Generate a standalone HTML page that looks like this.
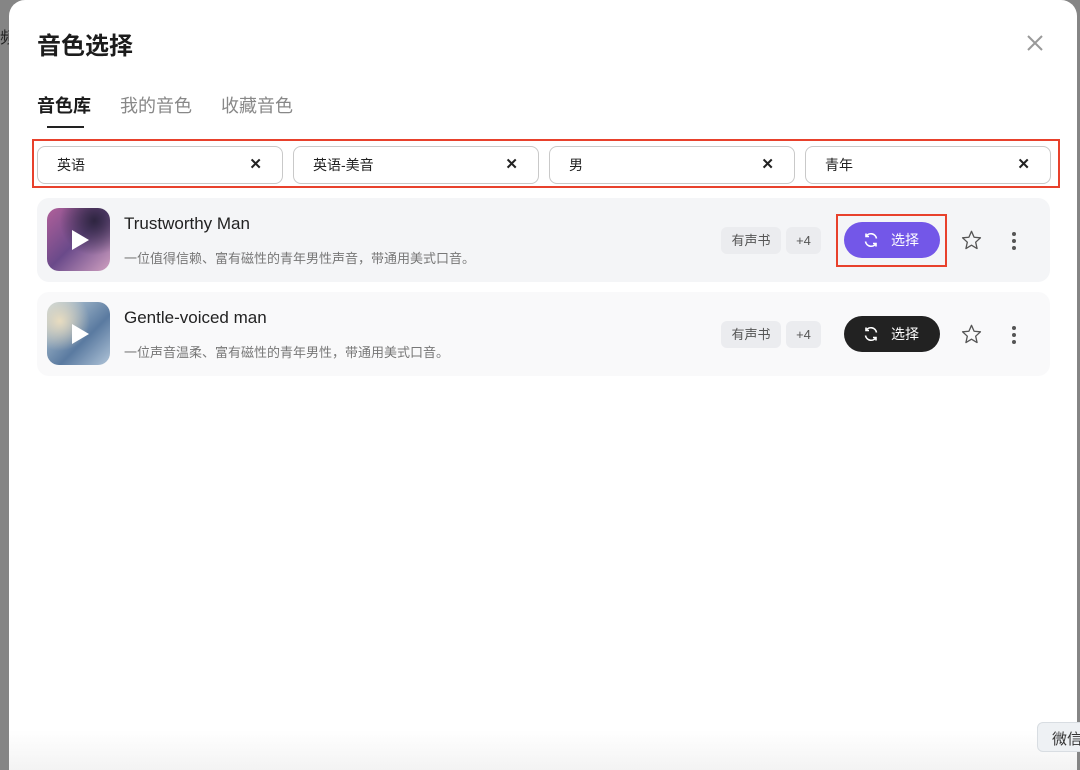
<!DOCTYPE html>
<html><head><meta charset="utf-8"><style>
*{box-sizing:border-box;margin:0;padding:0}
body{width:1080px;height:770px;overflow:hidden;background:#858585;font-family:"Liberation Sans","Noto Sans CJK SC",sans-serif;position:relative}
.modal{position:absolute;left:9px;top:0;width:1068px;height:770px;background:#fff;border-radius:16px 16px 0 0}
.t{position:absolute;left:28px;top:26px;font-size:24px;font-weight:bold;color:#1c1c1c}
.close{position:absolute;left:1016px;top:33px}
.tabs span{position:absolute;top:92px;font-size:18px;color:#888}
.ul{position:absolute;left:38px;top:126px;width:37px;height:2px;background:#222}
.fb{position:absolute;left:23px;top:139px;width:1028px;height:49px;border:2px solid #e8412c}
.f{position:absolute;top:146px;width:246px;height:38px;border:1px solid #c9c9c9;border-radius:8px;font-size:14px;color:#222;padding:8px 0 0 19px}
.f b{position:absolute;right:20px;top:8px;font-size:15px}
.row{position:absolute;left:28px;width:1013px;height:84px;border-radius:12px}
.thumb{position:absolute;left:10px;top:10px;width:63px;height:63px;border-radius:12px}
.name{position:absolute;left:87px;top:16px;font-size:17px;color:#222}
.desc{position:absolute;left:87px;top:50px;font-size:13px;color:#777}
.tag{position:absolute;top:29px;height:27px;border-radius:6px;background:#ebecef;font-size:13px;color:#555;text-align:center;line-height:27px}
.btn{position:absolute;left:807px;top:24px;width:96px;height:36px;border-radius:18px;color:#fff;font-size:14px;line-height:36px;padding-left:47px}
.btn svg{position:absolute;left:19px;top:10px}
.star{position:absolute;left:924px;top:32px}
.dots{position:absolute;left:975px;top:34px;width:4px}
.dots i{display:block;width:4px;height:4px;border-radius:2px;background:#555;margin-bottom:3px}
</style></head><body>
<div style="position:absolute;left:0;top:24px;font-size:16px;color:#222">频</div>
<div class="modal">
<div class="t">音色选择</div>
<svg class="close" width="20" height="20" viewBox="0 0 20 20"><path d="M3 3L17 17M17 3L3 17" stroke="#999" stroke-width="2"/></svg>
<div class="tabs"><span style="left:28px;color:#1c1c1c;font-weight:bold">音色库</span><span style="left:111px">我的音色</span><span style="left:212px">收藏音色</span></div>
<div class="ul"></div>
<div class="fb"></div>
<div class="f" style="left:28px">英语<b>✕</b></div>
<div class="f" style="left:284px">英语-美音<b>✕</b></div>
<div class="f" style="left:540px">男<b>✕</b></div>
<div class="f" style="left:796px">青年<b>✕</b></div>

<div class="row" style="top:198px;background:#f4f5f7">
<div class="thumb" style="background:radial-gradient(circle at 75% 20%,#2e2540,transparent 50%),linear-gradient(135deg,#b0609a,#6a4a8a 50%,#d0a0c0)"></div>
<svg style="position:absolute;left:33px;top:31px" width="20" height="22"><path d="M2 1L19 11L2 21Z" fill="#fff"/></svg>
<div class="name">Trustworthy Man</div>
<div class="desc">一位值得信赖、富有磁性的青年男性声音，带通用美式口音。</div>
<div class="tag" style="left:684px;width:60px">有声书</div>
<div class="tag" style="left:749px;width:35px">+4</div>
<div style="position:absolute;left:799px;top:16px;width:111px;height:53px;border:2px solid #e8412c"></div>
<div class="btn" style="background:#7357e8"><svg width="16" height="16" viewBox="0 0 16 16" fill="none" stroke="#fff" stroke-width="1.6"><path d="M13.5 6.5A5.7 5.7 0 0 0 3 4.5M2.5 9.5A5.7 5.7 0 0 0 13 11.5"/><path d="M3 1.5V4.5H6M13 14.5V11.5H10"/></svg>选择</div>
<svg class="star" width="21" height="20" viewBox="0 0 24 23"><path d="M12 1.5L15 8.3L22.3 9L16.8 14L18.4 21.3L12 17.5L5.6 21.3L7.2 14L1.7 9L9 8.3Z" fill="none" stroke="#555" stroke-width="1.5" stroke-linejoin="round"/></svg>
<div class="dots"><i></i><i></i><i></i></div>
</div>

<div class="row" style="top:292px;background:#f9f9fa">
<div class="thumb" style="background:radial-gradient(circle at 20% 30%,#e8dcc0,transparent 45%),linear-gradient(135deg,#c8d8e0,#5a7aa0 60%,#b0c4d8)"></div>
<svg style="position:absolute;left:33px;top:31px" width="20" height="22"><path d="M2 1L19 11L2 21Z" fill="#fff"/></svg>
<div class="name">Gentle-voiced man</div>
<div class="desc">一位声音温柔、富有磁性的青年男性，带通用美式口音。</div>
<div class="tag" style="left:684px;width:60px">有声书</div>
<div class="tag" style="left:749px;width:35px">+4</div>
<div class="btn" style="background:#222"><svg width="16" height="16" viewBox="0 0 16 16" fill="none" stroke="#fff" stroke-width="1.6"><path d="M13.5 6.5A5.7 5.7 0 0 0 3 4.5M2.5 9.5A5.7 5.7 0 0 0 13 11.5"/><path d="M3 1.5V4.5H6M13 14.5V11.5H10"/></svg>选择</div>
<svg class="star" width="21" height="20" viewBox="0 0 24 23"><path d="M12 1.5L15 8.3L22.3 9L16.8 14L18.4 21.3L12 17.5L5.6 21.3L7.2 14L1.7 9L9 8.3Z" fill="none" stroke="#555" stroke-width="1.5" stroke-linejoin="round"/></svg>
<div class="dots"><i></i><i></i><i></i></div>
</div>
<div style="position:absolute;left:0;bottom:0;width:1068px;height:40px;background:linear-gradient(#fff,#f3f3f3)"></div>
</div>
<div style="position:absolute;left:1037px;top:722px;width:60px;height:30px;background:#eef1f4;border:1px solid #d8dde2;border-radius:6px;font-size:15px;color:#333;padding:5px 0 0 14px">微信</div>
</body></html>
